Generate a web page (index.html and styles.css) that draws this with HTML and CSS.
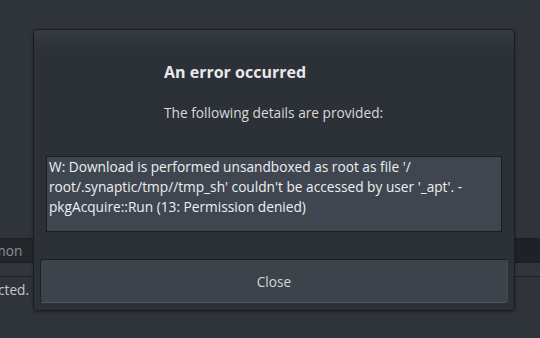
FILE: index.html
```html
<!DOCTYPE html>
<html>
<head>
<meta charset="utf-8">
<title>An error occurred</title>
<link rel="stylesheet" href="styles.css">
</head>
<body>
<div class="backdrop">
  <div class="list-head"><span class="head-text">mon</span></div>
  <div class="list-band"></div>
  <div class="status"><span class="status-text">cted.</span></div>
</div>

<div class="dialog" role="alertdialog" aria-labelledby="dlg-title">
  <div class="dialog-body">
    <div class="title" id="dlg-title">An error occurred</div>
    <div class="subtitle">The following details are provided:</div>
    <div class="details">W: Download is performed unsandboxed as root as file '/<br>root/.synaptic/tmp//tmp_sh' couldn't be accessed by user '_apt'. -<br>pkgAcquire::Run (13: Permission denied)</div>
  </div>
  <button class="close-btn" type="button">Close</button>
</div>
</body>
</html>
```
FILE: styles.css
```css
html, body {
  margin: 0;
  padding: 0;
}
body {
  width: 540px;
  height: 338px;
  overflow: hidden;
  background: #2f343b;
  font-family: "Open Sans", "Noto Sans", sans-serif;
  font-size: 13.7px;
  position: relative;
}

/* background window content */
.backdrop {
  padding-top: 238px;
}
.list-head {
  height: 23px;
  line-height: 23px;
  background: linear-gradient(to right, #23262b 0%, #212428 60%, #1e2125 100%);
  border-top: 1px solid #1b1e22;
  border-bottom: 1px solid #1b1e22;
  color: #8c9096;
  white-space: nowrap;
  overflow: hidden;
}
.head-text {
  margin-left: -7px;
}
.list-band {
  height: 13px;
  background: #31363e;
  border-bottom: 1px solid #1d2024;
}
.status {
  height: 26px;
  line-height: 25px;
  color: #c3c6ca;
  white-space: nowrap;
  overflow: hidden;
}
.status-text {
  margin-left: -2px;
}

/* dialog */
.dialog {
  position: absolute;
  left: 33px;
  top: 29px;
  width: 480px;
  height: 280px;
  border: 1px solid #1a1d21;
  border-radius: 4px;
  background: linear-gradient(to bottom, #373c44 0px, #30353c 12px, #2c3037 22px, #2c3037 100%);
  box-shadow: 0 1px 3px rgba(0, 0, 0, 0.35);
  display: flex;
  flex-direction: column;
}
.dialog-body {
  flex: 1;
  padding-top: 31px;
  display: flex;
  flex-direction: column;
}
.title {
  padding-left: 130px;
  font-weight: bold;
  font-size: 16px;
  line-height: 22px;
  color: #e8e8e9;
}
.subtitle {
  padding-left: 130px;
  margin-top: 20px;
  line-height: 20px;
  color: #d9dadc;
}
.details {
  margin: 33px 12px 0;
  height: 74px;
  padding: 0 2px;
  border: 1px solid #1a1d21;
  background: #3f4650;
  color: #eeeff0;
  line-height: 20px;
  white-space: nowrap;
}
.close-btn {
  margin: 0 6px 7px;
  height: 44px;
  border: 1px solid #1d2025;
  border-bottom-color: #4c545d;
  border-right-color: #454c55;
  border-radius: 3px;
  background: #3c434b;
  color: #d4d6d8;
  font-family: "Open Sans", "Noto Sans", sans-serif;
  font-size: 13.7px;
  padding: 0;
}
```
